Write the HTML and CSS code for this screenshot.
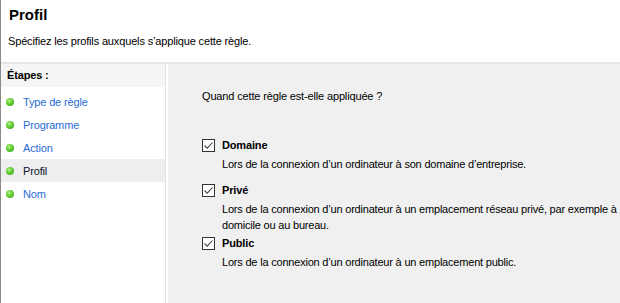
FILE: index.html
```html
<!DOCTYPE html>
<html lang="fr">
<head>
    <meta charset="UTF-8">
    <title>Profil</title>
    <link rel="stylesheet" href="styles.css">
</head>
<body>
    <div class="header">
        <h1>Profil</h1>
        <p>Spécifiez les profils auxquels s’applique cette règle.</p>
    </div>
    <div class="main">
        <div class="steps">
            <div class="steps-title">Étapes :</div>
            <ul class="step-list">
                <li class="step"><span class="dot"></span>Type de règle</li>
                <li class="step"><span class="dot"></span>Programme</li>
                <li class="step"><span class="dot"></span>Action</li>
                <li class="step current"><span class="dot"></span>Profil</li>
                <li class="step"><span class="dot"></span>Nom</li>
            </ul>
        </div>
        <div class="content">
            <p class="question">Quand cette règle est-elle appliquée ?</p>
            <div class="options">
                <div class="option">
                    <label class="check"><span class="box"><svg width="11" height="11" viewBox="0 0 11 11"><path d="M1.5 5.5 L4.2 8.2 L9.5 2.5" fill="none" stroke="#444" stroke-width="1.1"/></svg></span>Domaine</label>
                    <div class="desc">Lors de la connexion d’un ordinateur à son domaine d’entreprise.</div>
                </div>
                <div class="option">
                    <label class="check"><span class="box"><svg width="11" height="11" viewBox="0 0 11 11"><path d="M1.5 5.5 L4.2 8.2 L9.5 2.5" fill="none" stroke="#444" stroke-width="1.1"/></svg></span>Privé</label>
                    <div class="desc">Lors de la connexion d’un ordinateur à un emplacement réseau privé, par exemple à domicile ou au bureau.</div>
                </div>
                <div class="option">
                    <label class="check"><span class="box"><svg width="11" height="11" viewBox="0 0 11 11"><path d="M1.5 5.5 L4.2 8.2 L9.5 2.5" fill="none" stroke="#444" stroke-width="1.1"/></svg></span>Public</label>
                    <div class="desc">Lors de la connexion d’un ordinateur à un emplacement public.</div>
                </div>
            </div>
        </div>
    </div>
</body>
</html>
```

FILE: styles.css
```css
html, body { height: 100%; }
body { margin: 0; font-family: "Liberation Sans", Arial, sans-serif; font-size: 11px; letter-spacing: -0.15px; color: #000; background: #fff; border-left: 1px solid #8a8a8a; display: flex; flex-direction: column; overflow: hidden; }

.header { height: 64px; padding-left: 7px; border-bottom: 2px solid #e6e6e6; box-sizing: border-box; }
.header h1 { margin: 0; padding: 6px 0 0 1px; font-size: 15px; letter-spacing: 0; font-weight: bold; line-height: 18px; }
.header p { margin: 9px 0 0 0; line-height: 16px; }

.main { flex: 1; display: flex; }
.steps { width: 164px; border-right: 1px solid #e3e3e3; margin-right: 2px; background: #fff; }
.steps-title { height: 23px; line-height: 23px; padding-left: 6px; font-weight: bold; background: #f5f5f5; }
.step-list { list-style: none; margin: 3px 0 0 0; padding: 0; }
.step { height: 23px; display: flex; align-items: center; color: #2a6bd6; }
.step.current { background: #eeeeee; color: #101030; }
.dot { width: 8px; height: 8px; border-radius: 50%; margin: 0 9px 0 5px; background: radial-gradient(circle at 40% 35%, #b6f28a 0, #5fcc2e 45%, #3a9a1a 100%); }

.content { flex: 1; background: #f0f0f0; padding: 24px 0 0 34px; }
.question { margin: 0; line-height: 16px; }
.options { margin-top: 33px; }
.check { display: flex; align-items: center; height: 16px; font-weight: bold; }
.box { width: 11px; height: 11px; border: 1px solid #333; background: #fff; margin-right: 7px; display: flex; }
.desc { margin: 3px 0 0 20px; line-height: 16px; min-height: 26px; padding-bottom: 2px; box-sizing: border-box; letter-spacing: -0.2px; }
```
